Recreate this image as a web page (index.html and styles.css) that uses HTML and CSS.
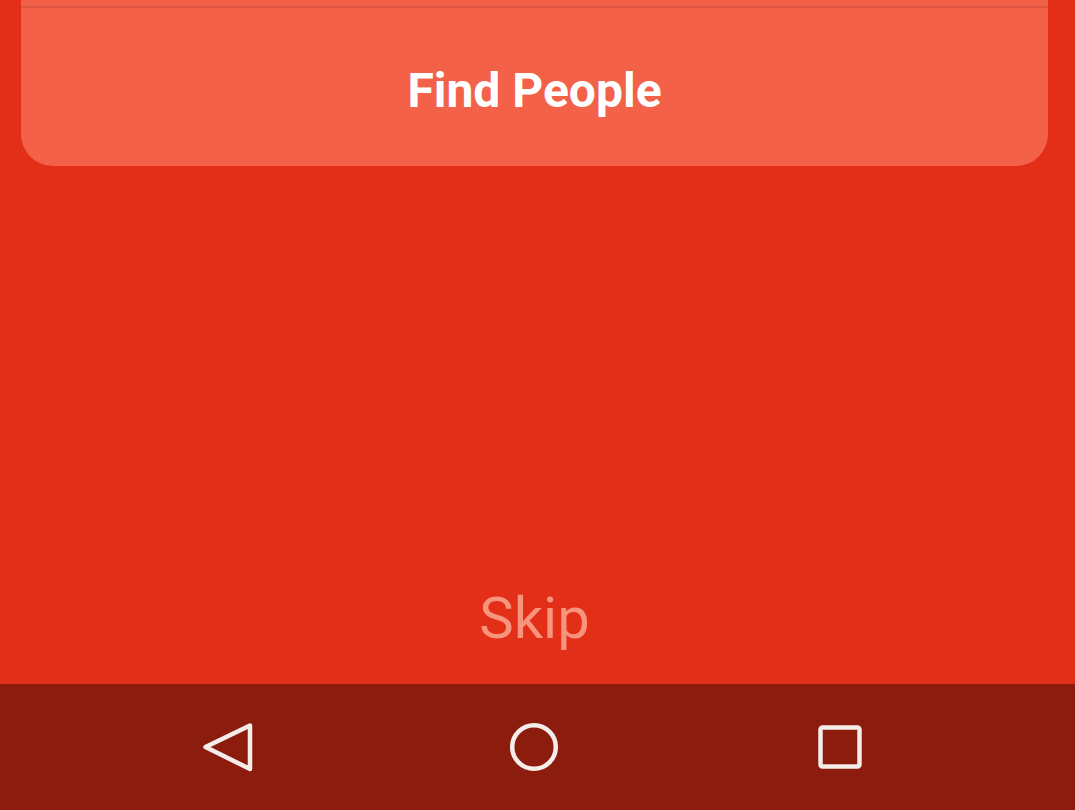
FILE: index.html
```html
<!DOCTYPE html>
<html>
<head>
<meta charset="utf-8">
<link rel="stylesheet" href="styles.css">
</head>
<body>
<div class="screen">
  <div class="content">
    <div class="card">
      <div class="card-top"></div>
      <div class="card-btn">Find People</div>
    </div>
    <div class="spacer"></div>
    <div class="skip">Skip</div>
  </div>
  <div class="navbar">
    <svg class="nav-icon" width="60" height="60" viewBox="0 0 60 60">
      <path d="M52 8.5 L52 52 L7.5 30 Z" fill="none" stroke="#F5EDEA" stroke-width="4.5" stroke-linejoin="round"/>
    </svg>
    <svg class="nav-icon" width="60" height="60" viewBox="0 0 60 60">
      <circle cx="30" cy="30" r="21.8" fill="none" stroke="#F5EDEA" stroke-width="4.5"/>
    </svg>
    <svg class="nav-icon" width="60" height="60" viewBox="0 0 60 60">
      <rect x="10.5" y="10.5" width="39" height="39" rx="2" fill="none" stroke="#F5EDEA" stroke-width="4.5"/>
    </svg>
  </div>
</div>
</body>
</html>
```
FILE: styles.css
```css
html, body {
  margin: 0;
  padding: 0;
}
body {
  width: 1075px;
  height: 810px;
  overflow: hidden;
  background: #E32F17;
  font-family: Roboto, "Liberation Sans", sans-serif;
}
.screen {
  display: flex;
  flex-direction: column;
  height: 810px;
}
.content {
  flex: 1;
  display: flex;
  flex-direction: column;
  padding: 0 27px 0 21px;
}
.card {
  background: #F26148;
  border-radius: 0 0 32px 32px;
  height: 166px;
  display: flex;
  flex-direction: column;
}
.card-top {
  height: 6px;
  border-bottom: 2px solid #DC5641;
}
.card-btn {
  flex: 1;
  display: flex;
  align-items: center;
  justify-content: center;
  color: #FFFFFF;
  font-weight: 700;
  font-size: 48px;
  padding-top: 6px;
}
.spacer {
  flex: 1;
}
.skip {
  text-align: center;
  color: #F7947C;
  font-size: 58px;
  line-height: 72px;
  margin-bottom: 30px;
}
.navbar {
  height: 126px;
  background: #8B1C0E;
  display: flex;
  align-items: center;
  gap: 246px;
  padding: 0 0 0 198px;
}
.nav-icon {
  display: block;
  flex: none;
}
```
